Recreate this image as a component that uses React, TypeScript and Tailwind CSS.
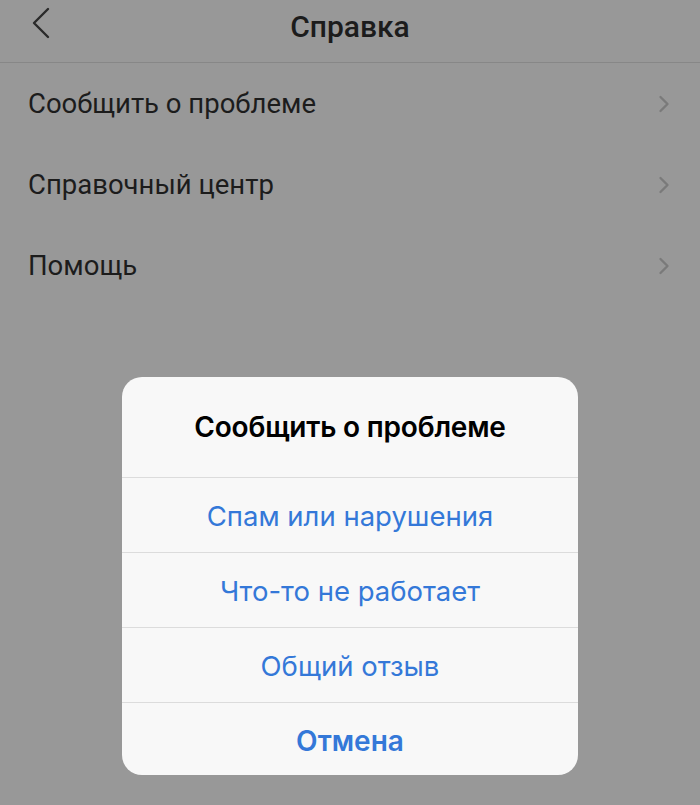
import { ChevronRight } from "lucide-react";

const rows = ["Сообщить о проблеме", "Справочный центр", "Помощь"];
const options = ["Спам или нарушения", "Что-то не работает", "Общий отзыв"];

export default function App() {
  return (
    <div className="relative h-[805px] w-[700px] overflow-hidden bg-[#989898] font-['Roboto',sans-serif]">
      {/* header */}
      <div className="relative flex h-[63px] items-center justify-center border-b border-[#878787]">
        <svg className="absolute left-[30px] top-[7px]" width="22" height="32" viewBox="0 0 22 32" fill="none">
          <path d="M18 2 L4 16 L18 30" stroke="#2a2a2a" strokeWidth="2.4" strokeLinecap="round" strokeLinejoin="round" />
        </svg>
        <h1 className="-mt-[9px] text-[30px] font-medium text-[#1c1c1c]">Справка</h1>
      </div>

      {/* list */}
      <div className="flex flex-col">
        {rows.map((r) => (
          <div key={r} className="flex h-[81px] items-center justify-between pl-[28px] pr-[24px]">
            <span className="text-[27.5px] text-[#1c1c1c]">{r}</span>
            <ChevronRight className="-mr-[2px] h-[28px] w-[28px] text-[#7a7a7a]" strokeWidth={2} />
          </div>
        ))}
      </div>

      {/* alert */}
      <div className="absolute left-[122px] top-[377px] w-[456px] overflow-hidden rounded-[20px] bg-[#f8f8f8] font-['Inter',sans-serif]">
        <div className="flex h-[100px] items-center justify-center">
          <span className="text-[28px] font-semibold tracking-[-0.2px] text-black">Сообщить о проблеме</span>
        </div>
        {options.map((o) => (
          <div key={o} className="flex h-[75px] items-center justify-center border-t border-[#dcdcdc] pt-[3px]">
            <span className="text-[27.5px] text-[#3478d8]">{o}</span>
          </div>
        ))}
        <div className="flex h-[73px] items-center justify-center border-t border-[#dcdcdc] pt-[3px]">
          <span className="text-[28px] font-semibold text-[#3478d8]">Отмена</span>
        </div>
      </div>
    </div>
  );
}
